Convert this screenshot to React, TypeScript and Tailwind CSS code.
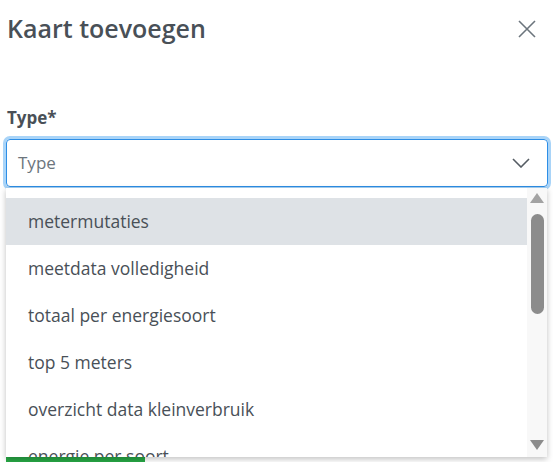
import React from 'react';

const options = [
    'metermutaties',
    'meetdata volledigheid',
    'totaal per energiesoort',
    'top 5 meters',
    'overzicht data kleinverbruik',
    'energie per soort',
];

const App: React.FC = () => {
    return (
        <div className="w-[553px] h-[462px] overflow-hidden bg-white text-[#495057] font-['Open_Sans',sans-serif]">
            {/* Header */}
            <div className="flex items-center justify-between pl-[7px] pr-[17px] h-[58px]">
                <h2 className="text-[25px] font-semibold leading-none text-[#495057] -mt-[1px]">Kaart toevoegen</h2>
                <button className="text-[#6c757d]">
                    <svg className="w-[18px] h-[18px]" viewBox="0 0 18 18" fill="none" stroke="currentColor" strokeWidth={1.6}>
                        <path d="M1 1l16 16M17 1L1 17" />
                    </svg>
                </button>
            </div>

            {/* Form */}
            <div className="pl-[6px] pr-[5px] pt-[51px]">
                <label className="block pl-[1px] text-[17px] font-bold leading-none mb-[13px]">Type*</label>
                <div className="relative">
                    <div className="flex items-center justify-between h-[48px] rounded-[4px] border border-[#2d8ee6] shadow-[0_0_0_3px_#a9d4f8] pl-[11px] pr-[17px]">
                        <span className="text-[17px] text-[#6c757d]">Type</span>
                        <svg className="w-[18px] h-[10px] text-[#555c63]" viewBox="0 0 18 10" fill="none" stroke="currentColor" strokeWidth={1.6}>
                            <path d="M1 1l8 8 8-8" />
                        </svg>
                    </div>

                    {/* Dropdown menu */}
                    <div className="absolute left-0 top-[49px] w-[541px] h-[269px] bg-white shadow-[0_2px_6px_rgba(0,0,0,0.25)] flex z-10">
                        <div className="flex-1 overflow-hidden pt-[10px]">
                            {options.map((o, i) => (
                                <div
                                    key={o}
                                    className={`h-[47px] flex items-center pl-[22px] text-[17.5px] text-[#495057] ${i === 0 ? 'bg-[#dee2e6]' : ''}`}
                                >
                                    {o}
                                </div>
                            ))}
                        </div>
                        <div className="w-[20px] bg-[#f8f8f8] flex flex-col items-center pt-[5px] pb-[7px]">
                            <div className="w-0 h-0 border-l-[7px] border-r-[7px] border-b-[10px] border-l-transparent border-r-transparent border-b-[#a3a3a3]" />
                            <div className="w-[13px] h-[100px] mt-[11px] rounded-full bg-[#8c8c8c]" />
                            <div className="flex-1" />
                            <div className="w-0 h-0 border-l-[7px] border-r-[7px] border-t-[10px] border-l-transparent border-r-transparent border-t-[#8c8c8c]" />
                        </div>
                    </div>
                </div>

                {/* Button beneath the dropdown */}
                <div className="mt-[266px] w-[139px] h-[40px] bg-[#28a745] rounded-[4px]" />
            </div>
        </div>
    );
};

export default App;
